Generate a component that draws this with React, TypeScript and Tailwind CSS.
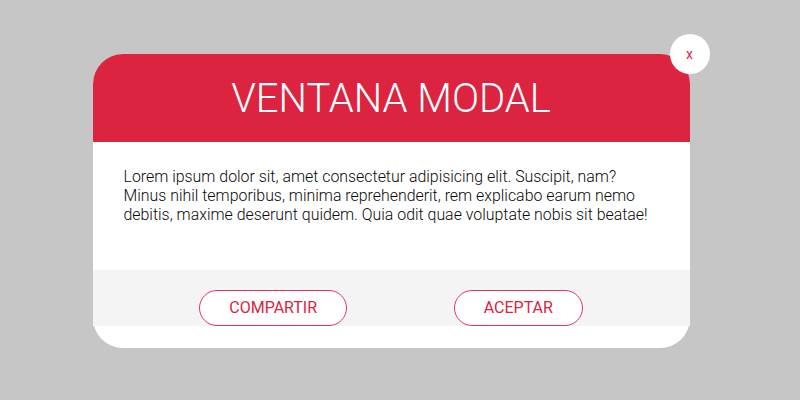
import { useState } from "react";

export default function App() {
  const [open, setOpen] = useState(true);

  return (
    <div className="min-h-screen w-full bg-[#c6c6c6] flex items-center justify-center font-['Roboto',sans-serif]">
      {open && (
        <div className="relative w-[597px] h-[294px] mr-[18px] mt-[2px] bg-white rounded-[30px] flex flex-col">
          <header className="h-[88px] bg-[#dc233f] rounded-t-[30px] flex items-center justify-center">
            <h1 className="text-white text-[40px] font-light leading-none pt-[1px]">
              VENTANA MODAL
            </h1>
          </header>

          <div className="h-[128px] pl-[31px] pr-[30px] pt-[25px]">
            <p className="text-[15.9px] leading-[19px] font-light text-[#0a0a0a]">
              Lorem ipsum dolor sit, amet consectetur adipisicing elit. Suscipit, nam? Minus nihil
              temporibus, minima reprehenderit, rem explicabo earum nemo debitis, maxime deserunt
              quidem. Quia odit quae voluptate nobis sit beatae!
            </p>
          </div>

          <footer className="h-[56px] bg-[#f4f4f4] flex items-end justify-evenly">
            <button className="w-[148px] h-[36px] rounded-full border border-[#e0355a] bg-white text-[#dc233f] text-[16px]">
              COMPARTIR
            </button>
            <button
              onClick={() => setOpen(false)}
              className="w-[129px] h-[36px] rounded-full border border-[#e0355a] bg-white text-[#dc233f] text-[16px]"
            >
              ACEPTAR
            </button>
          </footer>

          <button
            onClick={() => setOpen(false)}
            className="absolute -top-5 -right-5 w-10 h-10 rounded-full bg-white text-[#dc233f] text-[14px] flex items-center justify-center"
          >
            x
          </button>
        </div>
      )}
    </div>
  );
}
